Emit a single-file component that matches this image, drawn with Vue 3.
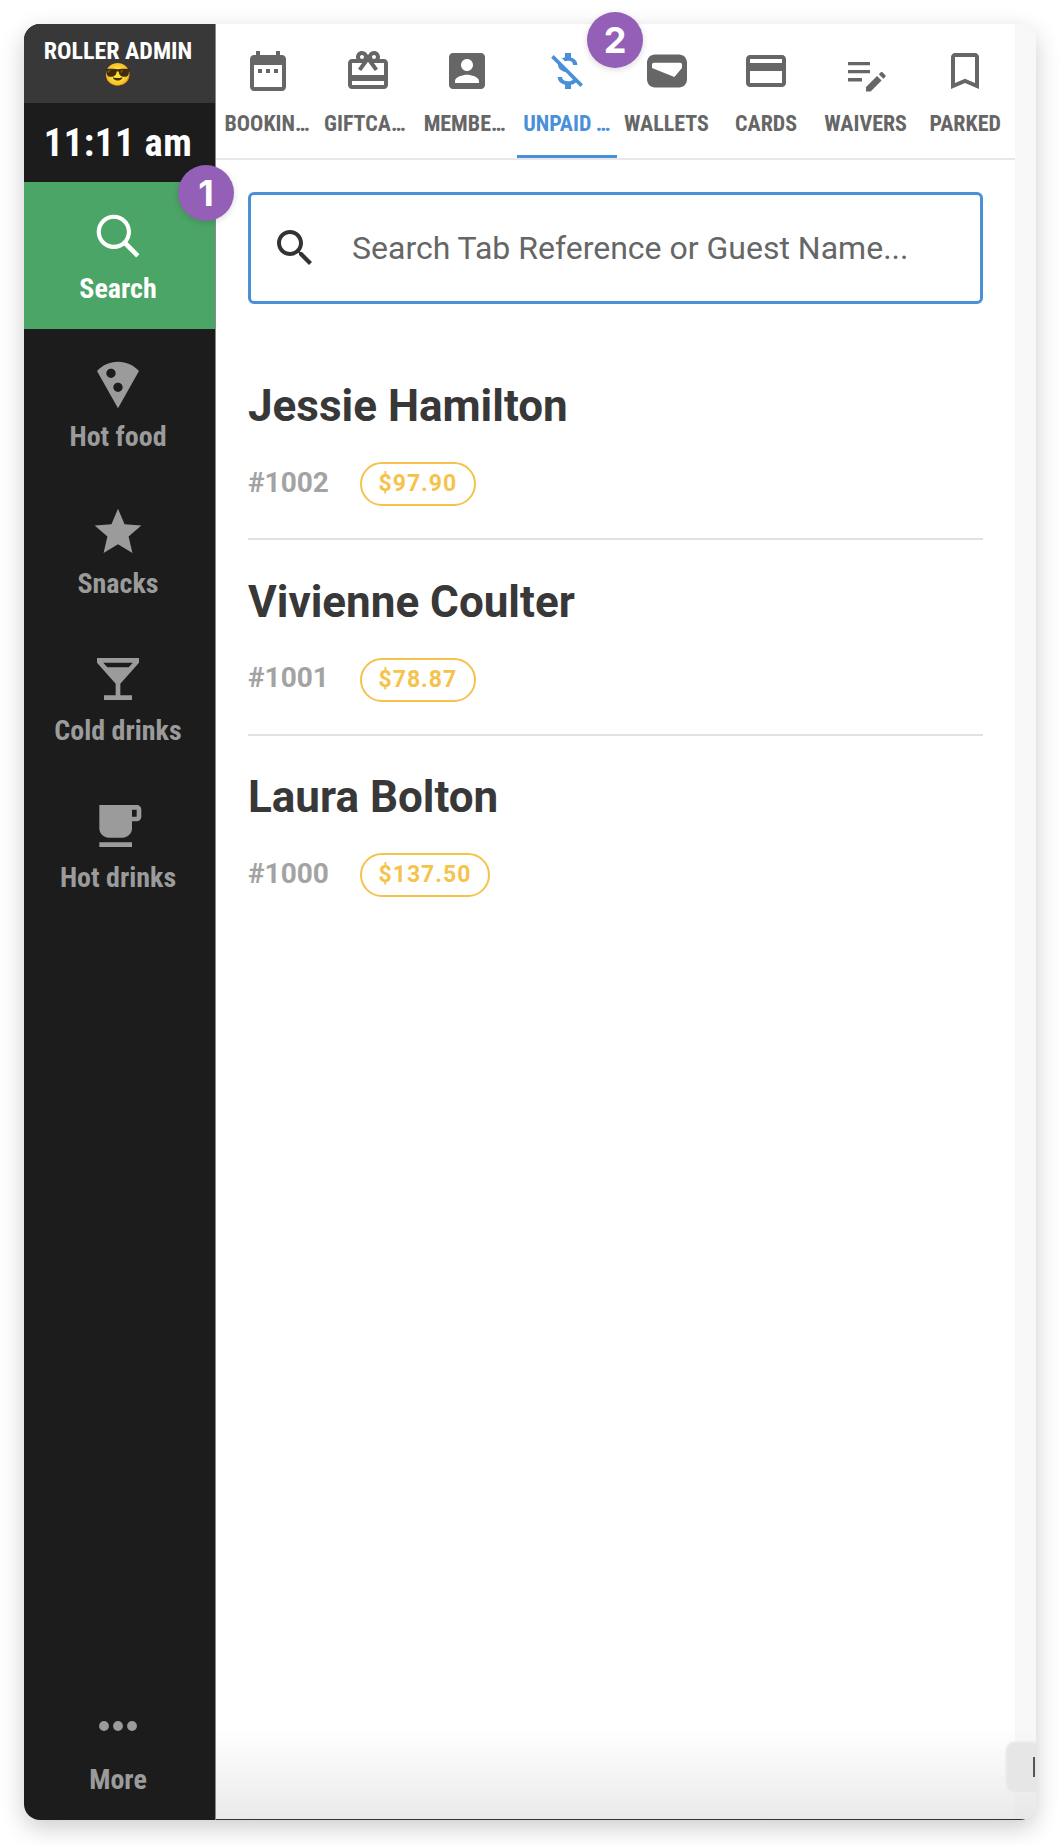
<script setup>
const tabs = [
  { label: 'BOOKINGS', icon: 'M19 4h-1V2h-2v2H8V2H6v2H5c-1.1 0-2 .9-2 2v14c0 1.1.9 2 2 2h14c1.1 0 2-.9 2-2V6c0-1.1-.9-2-2-2zm0 16H5V9h14zM7 11h2v2H7zm4 0h2v2h-2zm4 0h2v2h-2z' },
  { label: 'GIFTCARDS', icon: 'M20 6h-2.18c.11-.31.18-.65.18-1 0-1.66-1.34-3-3-3-1.05 0-1.96.54-2.5 1.35l-.5.67-.5-.68C10.96 2.54 10.05 2 9 2 7.34 2 6 3.34 6 5c0 .35.07.69.18 1H4c-1.11 0-1.99.89-1.99 2L2 19c0 1.11.89 2 2 2h16c1.11 0 2-.89 2-2V8c0-1.11-.89-2-2-2zm-5-2c.55 0 1 .45 1 1s-.45 1-1 1-1-.45-1-1 .45-1 1-1zM9 4c.55 0 1 .45 1 1s-.45 1-1 1-1-.45-1-1 .45-1 1-1zm11 15H4v-2h16v2zm0-5H4V8h5.08L7 10.83 8.62 12 11 8.76l1-1.36 1 1.36L15.38 12 17 10.83 14.92 8H20v6z' },
  { label: 'MEMBERSHIPS', icon: 'M3 5v14c0 1.1.89 2 2 2h14c1.1 0 2-.9 2-2V5c0-1.1-.9-2-2-2H5c-1.11 0-2 .9-2 2zm12 4c0 1.66-1.34 3-3 3s-3-1.34-3-3 1.34-3 3-3 3 1.34 3 3zm-9 8c0-2 4-3.1 6-3.1s6 1.1 6 3.1v1H6v-1z' },
  { label: 'UNPAID TABS', active: true, icon: 'M12.5 6.9c1.78 0 2.44.85 2.5 2.1h2.21c-.07-1.72-1.12-3.3-3.21-3.81V3h-3v2.16c-.53.12-1.03.3-1.48.54l1.47 1.47c.41-.17.91-.27 1.51-.27zM5.33 4.06L4.06 5.33 7.5 8.77c0 2.08 1.56 3.21 3.91 3.91l3.51 3.51c-.34.48-1.05.91-2.42.91-2.06 0-2.87-.92-2.98-2.1h-2.2c.12 2.19 1.76 3.42 3.68 3.83V21h3v-2.15c.96-.18 1.82-.55 2.45-1.12l2.22 2.22 1.27-1.27L5.33 4.06z' },
  { label: 'WALLETS', icon: 'M6 3.75h12c2.2 0 4 1.8 4 4v8.5c0 2.2-1.8 4-4 4H6c-2.2 0-4-1.8-4-4v-8.5c0-2.2 1.8-4 4-4zM5.5 7.9h13c.6 0 1 .4 1 1v1.6L15.7 15 4.5 10.500V8.900c0-.6.4-1 1-1z' },
  { label: 'CARDS', icon: 'M20 4H4c-1.11 0-1.99.89-1.99 2L2 18c0 1.11.89 2 2 2h16c1.11 0 2-.89 2-2V6c0-1.11-.89-2-2-2zm0 14H4v-6h16v6zm0-10H4V6h16v2z' },
  { label: 'WAIVERS', icon: 'M3 7.5h11v1.600H3zM3 11.500h11v1.600H3zM3 15.500h7v1.700H3zM12 20l5.500-5.500 2.300 2.300-5.500 5.500H12zM18.400 13.600l.9-.9c.3-.3.7-.3 1 0l1.300 1.300c.3.3.3.7 0 1l-.9.9z' },
  { label: 'PARKED', icon: 'M17 3H7c-1.1 0-1.99.9-1.99 2L5 21l7-3 7 3V5c0-1.1-.9-2-2-2zm0 15l-5-2.18L7 18V5h10v13z' },
]
const navItems = [
  { label: 'Hot food', icon: 'M12 2C8.43 2 5.23 3.54 3.01 6L12 22l8.99-16C18.78 3.55 15.57 2 12 2zM7 7c0-1.1.9-2 2-2s2 .9 2 2-.9 2-2 2-2-.9-2-2zm5 8c-1.1 0-2-.9-2-2s.9-2 2-2 2 .9 2 2-.9 2-2 2z' },
  { label: 'Snacks', icon: 'M12 17.27L18.18 21l-1.64-7.03L22 9.24l-7.19-.61L12 2 9.19 8.63 2 9.24l5.46 4.73L5.82 21z' },
  { label: 'Cold drinks', icon: 'M21 5V3H3v2l8 9v5H6v2h12v-2h-5v-5l8-9zM7.43 7L5.66 5h12.69l-1.78 2H7.43z' },
  { label: 'Hot drinks', icon: 'M20 3H4v10c0 2.21 1.79 4 4 4h6c2.21 0 4-1.79 4-4v-3h2c1.11 0 2-.89 2-2V5c0-1.11-.89-2-2-2zm0 5h-2V5h2v3zM4 19h14v2H4z' },
]
const guests = [
  { name: 'Jessie Hamilton', ref: '#1002', amount: '$97.90' },
  { name: 'Vivienne Coulter', ref: '#1001', amount: '$78.87' },
  { name: 'Laura Bolton', ref: '#1000', amount: '$137.50' },
]
</script>

<template>
  <div class="page">
    <div class="window">
      <aside class="sidebar">
        <div class="user"><span>ROLLER ADMIN</span><span class="emoji">😎</span></div>
        <div class="clock">11:11 am</div>
        <div class="nav-item current">
          <svg class="nav-icon" viewBox="0 0 48 48" fill="none" stroke="#fff" stroke-width="4">
            <circle cx="20" cy="20" r="14.500" />
            <path d="M30.500 30.500L43 43" stroke-width="4.500" />
          </svg>
          <span class="nav-label">Search</span>
        </div>
        <div v-for="item in navItems" :key="item.label" class="nav-item">
          <svg class="nav-icon" viewBox="0 0 24 24" fill="#9b9b9b"><path :d="item.icon" /></svg>
          <span class="nav-label">{{ item.label }}</span>
        </div>
        <div class="nav-item more">
          <svg class="nav-icon" viewBox="0 0 24 24" fill="#9b9b9b">
            <circle cx="6" cy="12" r="2.100" /><circle cx="12" cy="12" r="2.100" /><circle cx="18" cy="12" r="2.100" />
          </svg>
          <span class="nav-label">More</span>
        </div>
      </aside>

      <main class="content">
        <nav class="tabs">
          <div v-for="tab in tabs" :key="tab.label" class="tab" :class="{ active: tab.active }">
            <svg class="tab-icon" viewBox="0 0 24 24" fill="currentColor" fill-rule="evenodd"><path :d="tab.icon" /></svg>
            <span class="tab-label">{{ tab.label }}</span>
          </div>
        </nav>
        <div class="body">
          <div class="search">
            <svg class="search-icon" viewBox="0 0 24 24" fill="#333"><path d="M15.500 14h-.790l-.280-.270C15.410 12.590 16 11.110 16 9.500 16 5.910 13.090 3 9.500 3S3 5.910 3 9.500 5.910 16 9.500 16c1.610 0 3.090-.590 4.230-1.570l.270.280v.790l5 4.990L20.490 19l-4.990-5zm-6 0C7.010 14 5 11.990 5 9.500S7.010 5 9.500 5 14 7.010 14 9.500 11.990 14 9.500 14z" /></svg>
            <span class="placeholder">Search Tab Reference or Guest Name...</span>
          </div>
          <ul class="guests">
            <li v-for="g in guests" :key="g.ref" class="guest">
              <h2 class="name">{{ g.name }}</h2>
              <div class="meta">
                <span class="ref">{{ g.ref }}</span>
                <span class="amount">{{ g.amount }}</span>
              </div>
            </li>
          </ul>
        </div>
      </main>
      <div class="rail"></div>

      <div class="fade"></div>
      <div class="float-tab"><i></i></div>
    </div>
    <div class="step step-one">1</div>
    <div class="step step-two">2</div>
  </div>
</template>

<style>
html, body { margin: 0; background: #fff; }
</style>

<style scoped>
.page {
  position: relative;
  box-sizing: border-box;
  height: 1845px;
  padding: 24px 23px 25px 24px;
  font-family: Roboto, "Liberation Sans", sans-serif;
}
.window {
  position: relative;
  display: flex;
  height: 100%;
  overflow: hidden;
  border-radius: 16px;
  background: #fff;
  box-shadow: 0 8px 24px rgba(0, 0, 0, .2);
}
.sidebar {
  flex: 0 0 192px;
  box-sizing: border-box;
  display: flex;
  flex-direction: column;
  background: #1c1c1c;
  border-right: 1px solid #8a8a8a;
  color: #9b9b9b;
  font-stretch: 75%;
}
.user {
  height: 79px;
  box-sizing: border-box;
  padding: 15px 3px 0 0;
  background: #383838;
  color: #fff;
  display: flex;
  flex-direction: column;
  align-items: center;
  font-size: 24px;
  font-weight: 700;
  line-height: 24px;
}
.emoji { font-family: "Noto Color Emoji", "DejaVu Sans", sans-serif; font-size: 22px; line-height: 24px; }
.clock {
  height: 79px;
  box-sizing: border-box;
  padding-right: 3px;
  display: flex;
  align-items: center;
  justify-content: center;
  color: #fff;
  font-size: 38.500px;
  font-weight: 700;
  letter-spacing: .6px;
}
.nav-item {
  flex: 0 0 147px;
  box-sizing: border-box;
  padding: 28px 3px 0 0;
  display: flex;
  flex-direction: column;
  align-items: center;
}
.nav-item.current { background: #4ba566; color: #fff; padding-top: 29px; }
.nav-item.more { margin-top: auto; flex-basis: 122px; padding-top: 0; }
.nav-icon { width: 56px; height: 56px; }
.current .nav-icon { width: 50px; height: 50px; }
.nav-label { margin-top: 9px; font-size: 28px; font-weight: 700; line-height: 30px; }
.current .nav-label { margin-top: 13px; }
.more .nav-label { margin-top: 11px; }
.content { flex: 1; min-width: 0; display: flex; flex-direction: column; }
.tabs {
  height: 134px;
  display: flex;
  padding: 0 0 0 2.500px;
  border-bottom: 2px solid #e8e8e8;
}
.tab {
  flex: 1 1 0;
  min-width: 0;
  padding: 23px 6px 0;
  box-sizing: border-box;
  display: flex;
  flex-direction: column;
  align-items: center;
  color: #666;
  position: relative;
}
.tab.active { color: #4a90d9; }
.tab.active::after {
  content: "";
  position: absolute;
  left: 0;
  right: 0;
  bottom: 0;
  height: 3px;
  background: #4a90d9;
}
.tab-icon { width: 48px; height: 48px; flex: none; }
.tab-label {
  margin-top: 17px;
  max-width: 100%;
  overflow: hidden;
  white-space: nowrap;
  text-overflow: ellipsis;
  font-size: 22px;
  font-weight: 700;
  line-height: 24px;
  font-stretch: 75%;
}
.body { padding: 32px 32px 0 32px; }
.search {
  height: 112px;
  box-sizing: border-box;
  border: 3px solid #4a90d9;
  border-radius: 6px;
  display: flex;
  align-items: center;
  padding-left: 20px;
}
.search-icon { width: 48px; height: 48px; flex: none; margin-right: 33px; }
.placeholder { font-size: 32px; color: #666; }
.guests { list-style: none; margin: 40.500px 0 0; padding: 0; }
.guest {
  height: 195.500px;
  box-sizing: border-box;
  padding-top: 37.500px;
  border-bottom: 2px solid #e2e2e2;
}
.guest:last-child { border-bottom: 0; }
.name { margin: 0; font-size: 44px; font-weight: 700; line-height: 48px; color: #383838; }
.meta { display: flex; align-items: center; margin-top: 32px; }
.ref { width: 112px; padding-bottom: 4px; font-size: 28px; font-weight: 700; color: #a3a3a3; }
.amount {
  height: 44px;
  box-sizing: border-box;
  padding: 0 16.500px;
  border: 2px solid #f5c34c;
  border-radius: 22px;
  color: #f5c34c;
  font-size: 23px;
  font-weight: 700;
  letter-spacing: 1px;
  line-height: 40px;
}
.rail { flex: 0 0 21px; background: #f8f8f8; }
.fade {
  position: absolute;
  left: 192px;
  right: 0;
  bottom: 0;
  height: 90px;
  background: linear-gradient(rgba(225, 225, 225, 0), rgba(225, 225, 225, .7));
  border-bottom: 1px solid #333;
  pointer-events: none;
}
.float-tab {
  position: absolute;
  right: -6px;
  bottom: 26px;
  width: 33px;
  height: 49px;
  border: 2px solid #ededed;
  border-radius: 10px;
  background: #e6e6e6;
}
.float-tab i {
  position: absolute;
  left: 26px;
  top: 14px;
  width: 2px;
  height: 20px;
  background: #555;
}
.step {
  position: absolute;
  width: 56px;
  height: 56px;
  border-radius: 50%;
  background: #945fb6;
  color: #fff;
  font-size: 36px;
  font-weight: 700;
  font-family: Inter, Roboto, sans-serif;
  display: flex;
  align-items: center;
  justify-content: center;
  box-shadow: 0 2px 6px rgba(0, 0, 0, .15);
}
.step-one { left: 178px; top: 165px; }
.step-two { left: 587px; top: 12px; }
</style>
